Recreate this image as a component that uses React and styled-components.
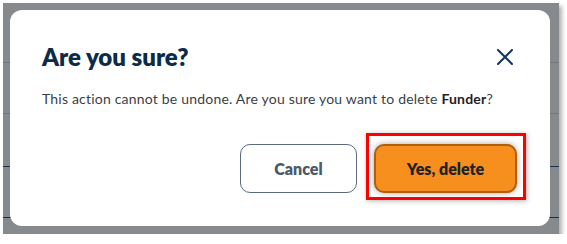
import styled, { createGlobalStyle } from 'styled-components';

const GlobalStyle = createGlobalStyle`
  html, body {
    margin: 0;
    padding: 0;
    background: #ffffff;
  }
  body {
    font-family: Lato, "Liberation Sans", sans-serif;
  }
`;

// the dimmed page behind the dialog, with a few table rows showing through
const Backdrop = styled.div`
  box-sizing: border-box;
  margin: 3px 0 0 3px;
  width: 556px;
  height: 231px;
  padding: 7px 9px 8px 7px;
  background:
    linear-gradient(#72767b, #72767b) 0 59px / 100% 1px no-repeat,
    linear-gradient(#72767b, #72767b) 0 110px / 100% 1px no-repeat,
    linear-gradient(#1d2f45, #1d2f45) 0 163px / 100% 1px no-repeat,
    linear-gradient(#1d2f45, #1d2f45) 0 214px / 100% 1px no-repeat,
    #878a8d;
  box-shadow: 3px 3px 4px rgba(0, 0, 0, 0.3);
`;

const Dialog = styled.div`
  box-sizing: border-box;
  height: 100%;
  background: #ffffff;
  border-radius: 12px;
  padding: 32px 33px 33px 32px;
  display: flex;
  flex-direction: column;
`;

const Header = styled.div`
  display: flex;
  align-items: center;
  justify-content: space-between;
`;

const Title = styled.h2`
  margin: 0;
  font-size: 24px;
  line-height: 30px;
  font-weight: 800;
  color: #0c2b4b;
`;

const CloseButton = styled.button`
  display: flex;
  align-items: center;
  justify-content: center;
  width: 24px;
  height: 24px;
  padding: 0;
  border: none;
  background: none;
  cursor: pointer;
  color: #12365a;
`;

const Message = styled.p`
  margin: 17px 0 0;
  font-size: 14px;
  line-height: 20px;
  letter-spacing: 0.2px;
  color: #3a3f45;

  strong {
    font-weight: 700;
    color: #1e2227;
  }
`;

const Actions = styled.div`
  margin-top: 35px;
  display: flex;
  justify-content: flex-end;
  gap: 17px;
`;

const Button = styled.button`
  box-sizing: border-box;
  height: 49px;
  border-radius: 10px;
  font-family: Lato, "Liberation Sans", sans-serif;
  font-size: 16px;
  font-weight: 800;
  cursor: pointer;
`;

const CancelButton = styled(Button)`
  width: 117px;
  background: #ffffff;
  border: 1px solid #5c6b7b;
  color: #4a5a6c;
`;

const DeleteButton = styled(Button)`
  width: 143px;
  background: #f78f1f;
  border: 2px solid #b0600d;
  color: #1f2328;
  box-shadow: 0 0 6px rgba(0, 0, 0, 0.35);
`;

// red annotation box drawn round the confirm button
const Highlight = styled.div`
  position: relative;

  &::after {
    content: '';
    position: absolute;
    top: -11px;
    left: -8px;
    right: -9px;
    bottom: -7px;
    border: 3px solid #ff0000;
    box-shadow: 1px 1px 5px rgba(0, 0, 0, 0.3);
    pointer-events: none;
  }
`;

function CloseIcon() {
  return (
    <svg width="16" height="16" viewBox="0 0 16 16" fill="none">
      <path d="M1 1L15 15M15 1L1 15" stroke="currentColor" strokeWidth="2" strokeLinecap="round" />
    </svg>
  );
}

export default function App() {
  return (
    <>
      <GlobalStyle />
      <Backdrop>
        <Dialog>
          <Header>
            <Title>Are you sure?</Title>
            <CloseButton aria-label="Close">
              <CloseIcon />
            </CloseButton>
          </Header>
          <Message>
            This action cannot be undone. Are you sure you want to delete <strong>Funder</strong>?
          </Message>
          <Actions>
            <CancelButton>Cancel</CancelButton>
            <Highlight>
              <DeleteButton>Yes, delete</DeleteButton>
            </Highlight>
          </Actions>
        </Dialog>
      </Backdrop>
    </>
  );
}
